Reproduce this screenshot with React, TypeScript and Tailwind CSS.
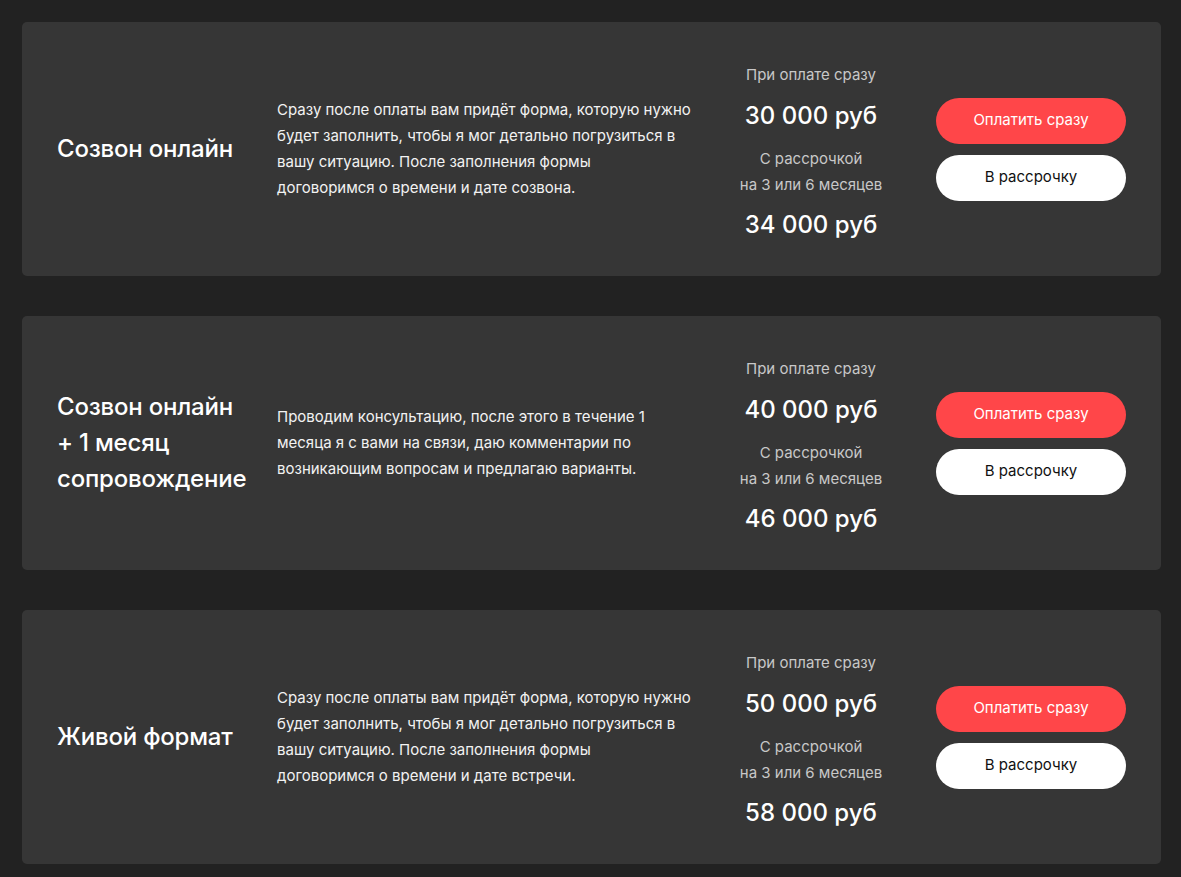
const plans = [
  {
    title: ["Созвон онлайн"],
    text: [
      "Сразу после оплаты вам придёт форма, которую нужно",
      "будет заполнить, чтобы я мог детально погрузиться в",
      "вашу ситуацию. После заполнения формы",
      "договоримся о времени и дате созвона.",
    ],
    now: "30 000 руб",
    later: "34 000 руб",
  },
  {
    title: ["Созвон онлайн", "+ 1 месяц", "сопровождение"],
    text: [
      "Проводим консультацию, после этого в течение 1",
      "месяца я с вами на связи, даю комментарии по",
      "возникающим вопросам и предлагаю варианты.",
    ],
    now: "40 000 руб",
    later: "46 000 руб",
  },
  {
    title: ["Живой формат"],
    text: [
      "Сразу после оплаты вам придёт форма, которую нужно",
      "будет заполнить, чтобы я мог детально погрузиться в",
      "вашу ситуацию. После заполнения формы",
      "договоримся о времени и дате встречи.",
    ],
    now: "50 000 руб",
    later: "58 000 руб",
  },
]

function PlanCard({ plan }: { plan: (typeof plans)[number] }) {
  return (
    <div className="flex h-[254px] items-center rounded-[5px] bg-[#363636] px-[35px]">
      {/* Title */}
      <div className="w-[220px] shrink-0 text-[24px] font-medium leading-[36px] tracking-[-0.2px] text-white">
        {plan.title.map((line) => (
          <div key={line}>{line}</div>
        ))}
      </div>

      {/* Description */}
      <div className="flex-1 pr-[20px]">
        <p className="text-[15px] leading-[26px] text-[#f2f2f2]">
          {plan.text.map((line) => (
            <span key={line} className="block whitespace-nowrap">
              {line}
            </span>
          ))}
        </p>
      </div>

      {/* Prices */}
      <div className="mt-[15px] flex w-[160px] shrink-0 flex-col items-center text-center">
        <div className="text-[15px] leading-[26px] text-[#c8c8c8]">При оплате сразу</div>
        <div className="text-[24px] font-medium leading-[56px] text-white">{plan.now}</div>
        <div className="mt-[2px] text-[15px] leading-[26px] text-[#c8c8c8]">
          С рассрочкой
          <br />
          на 3 или 6 месяцев
        </div>
        <div className="text-[24px] font-medium leading-[54px] text-white">{plan.later}</div>
      </div>

      {/* Buttons */}
      <div className="ml-[45px] flex w-[190px] shrink-0 flex-col gap-[11px]">
        <button className="h-[46px] rounded-full bg-[#ff4649] text-[15px] text-white">Оплатить сразу</button>
        <button className="h-[46px] rounded-full bg-white text-[15px] text-[#111]">В рассрочку</button>
      </div>
    </div>
  )
}

export default function App() {
  return (
    <div
      className="min-h-[877px] bg-[#222222] pt-[22px] pb-[14px] pl-[22px] pr-[20px]"
      style={{ fontFamily: "Inter, 'Noto Sans', sans-serif" }}
    >
      <div className="flex flex-col gap-[40px]">
        {plans.map((plan, i) => (
          <PlanCard key={i} plan={plan} />
        ))}
      </div>
    </div>
  )
}
